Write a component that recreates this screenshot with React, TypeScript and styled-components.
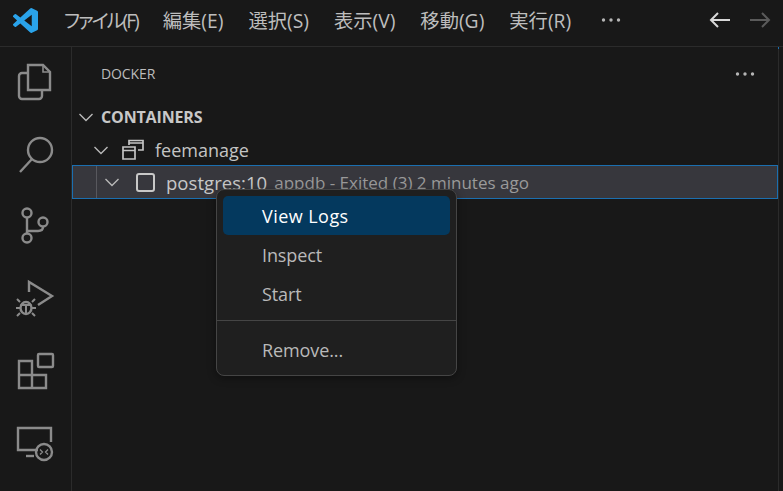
import * as React from 'react'
import styled, { createGlobalStyle } from 'styled-components'

const fontStack = `'Open Sans', 'Noto Sans CJK JP', sans-serif`

const GlobalStyle = createGlobalStyle`
  html, body {
    margin: 0;
    padding: 0;
    background: #181818;
  }
  * {
    box-sizing: border-box;
  }
`

const Chevron = () => (
  <svg width="16" height="16" viewBox="0 0 16 16" fill="none" stroke="#b8b8b8" strokeWidth="1.4">
    <path d="M1.5 5l6.5 6.5L14.5 5" />
  </svg>
)

const Dots = ({ colour }: { colour: string }) => (
  <svg width="20" height="6" viewBox="0 0 20 6" fill={colour}>
    <circle cx="2.5" cy="3" r="1.7" />
    <circle cx="10" cy="3" r="1.7" />
    <circle cx="17.5" cy="3" r="1.7" />
  </svg>
)

const Logo = () => (
  <svg width="25" height="25" viewBox="0 0 24 24" fill="#2aa3ea">
    <path d="M23.15 2.587L18.21.21a1.494 1.494 0 0 0-1.705.29l-9.46 8.63-4.12-3.128a.999.999 0 0 0-1.276.057L.327 7.261A1 1 0 0 0 .326 8.74L3.899 12 .326 15.26a1 1 0 0 0 .001 1.479L1.65 17.94a.999.999 0 0 0 1.276.057l4.12-3.128 9.46 8.63a1.492 1.492 0 0 0 1.704.29l4.942-2.377A1.5 1.5 0 0 0 24 20.06V3.939a1.5 1.5 0 0 0-.85-1.352zm-5.146 14.861L10.826 12l7.178-5.448v10.896z" />
  </svg>
)

const ActivityIcon = ({ children }: { children: React.ReactNode }) => (
  <svg width="44" height="44" viewBox="0 0 44 44" fill="none" stroke="#8b8b8b" strokeWidth="2.4">
    {children}
  </svg>
)

const activityIcons = [
  <ActivityIcon key="files">
    <path d="M15 6h15l7 7v18H15z" />
    <path d="M30 6v7h7" strokeWidth="1.6" />
    <path d="M15 14H9a3 3 0 0 0-3 3v20a3 3 0 0 0 3 3h17a3 3 0 0 0 3-3v-6" />
  </ActivityIcon>,
  <ActivityIcon key="search">
    <circle cx="27" cy="19" r="12" />
    <path d="M19 28L7 41" />
  </ActivityIcon>,
  <ActivityIcon key="git">
    <circle cx="14" cy="10" r="4.5" />
    <circle cx="14" cy="35" r="4.5" />
    <circle cx="30" cy="19" r="4.5" />
    <path d="M14 15v15" />
    <path d="M30 24c0 3-2 4-5 4H14" />
  </ActivityIcon>,
  <ActivityIcon key="debug">
    <path d="M16 17V7l23 14-14 9" />
    <ellipse cx="13" cy="33" rx="5.5" ry="6" />
    <path d="M7.5 30h11M13 30v9M7 27l-3-3M19 27l3-3M7 33H3M19 33h4M7 38l-3 3M19 38l3 3" strokeWidth="2" />
  </ActivityIcon>,
  <ActivityIcon key="extensions">
    <rect x="25" y="7" width="15" height="13" rx="1" />
    <path d="M6 14h13v27H6zM19 28h14v13H19zM6 28h13" />
  </ActivityIcon>,
  <ActivityIcon key="remote">
    <path d="M25 31H5V9h33v14" />
    <path d="M13 37h8" />
    <circle cx="31" cy="33" r="8" />
    <path d="M27 30.5l2.5 2.5-2.5 2.5M35 30.5L32.5 33l2.5 2.5" strokeWidth="1.3" />
  </ActivityIcon>,
]

const menuLabels = [
  { label: 'ファイル(F)', kana: true },
  { label: '編集(E)' },
  { label: '選択(S)' },
  { label: '表示(V)' },
  { label: '移動(G)' },
  { label: '実行(R)' },
]

export default function App() {
  return (
    <Window>
      <GlobalStyle />
      <TitleBar>
        <LogoSlot>
          <Logo />
        </LogoSlot>
        <MenuBar>
          {menuLabels.map(({ label, kana }) => (
            <MenuLabel key={label} $kana={kana}>
              {label}
            </MenuLabel>
          ))}
          <MoreSlot>
            <Dots colour="#b5b5b5" />
          </MoreSlot>
        </MenuBar>
        <NavArrows>
          <svg width="22" height="18" viewBox="0 0 22 18" fill="none" stroke="#d8d8d8" strokeWidth="2">
            <path d="M21 9H2M9 2L2 9l7 7" />
          </svg>
          <svg width="22" height="18" viewBox="0 0 22 18" fill="none" stroke="#5a5a5a" strokeWidth="2">
            <path d="M1 9h19M13 2l7 7-7 7" />
          </svg>
        </NavArrows>
      </TitleBar>
      <Body>
        <ActivityBar>
          {activityIcons.map((icon, i) => (
            <ActivitySlot key={i}>{icon}</ActivitySlot>
          ))}
        </ActivityBar>
        <SideBar>
          <PanelHeader>
            <PanelTitle>DOCKER</PanelTitle>
            <Dots colour="#b5b5b5" />
          </PanelHeader>
          <SectionHeader>
            <Chevron />
            <SectionTitle>CONTAINERS</SectionTitle>
          </SectionHeader>
          <GroupRow>
            <Chevron />
            <svg width="24" height="22" viewBox="0 0 24 22" fill="none" stroke="#c4c4c4" strokeWidth="1.7">
              <path d="M2 8h12v12H2zM2 11.5h12" />
              <path d="M8 6V1.5h14V11h-5M8 4h14" />
            </svg>
            <GroupLabel>feemanage</GroupLabel>
          </GroupRow>
          <ContainerRow>
            <IndentGuide />
            <Chevron />
            <StopBox />
            <ContainerName>postgres:10</ContainerName>
            <ContainerStatus>appdb - Exited (3) 2 minutes ago</ContainerStatus>
            <ContextMenu>
              <MenuItem $active>View Logs</MenuItem>
              <MenuItem>Inspect</MenuItem>
              <MenuItem>Start</MenuItem>
              <MenuDivider />
              <MenuItem>Remove...</MenuItem>
            </ContextMenu>
          </ContainerRow>
        </SideBar>
      </Body>
    </Window>
  )
}

const Window = styled.div`
  width: 783px;
  height: 491px;
  background: #181818;
  display: flex;
  flex-direction: column;
  overflow: hidden;
  font-family: ${fontStack};
  color: #cccccc;
`

const TitleBar = styled.div`
  height: 47px;
  padding-bottom: 6px;
  display: flex;
  align-items: center;
  border-bottom: 1px solid #2b2b2b;
  flex-shrink: 0;
`

const LogoSlot = styled.div`
  width: 64px;
  padding-left: 13px;
  display: flex;
  align-items: center;
`

const MenuBar = styled.div`
  display: flex;
  align-items: center;
  gap: 25px;
  flex: 1;
`

const MenuLabel = styled.span<{ $kana?: boolean }>`
  font-size: 19.3px;
  letter-spacing: ${({ $kana }) => ($kana ? '-2.05px' : '0')};
  font-feature-settings: ${({ $kana }) => ($kana ? "'palt'" : 'normal')};
  color: #bdbdbd;
  white-space: nowrap;
`

const MoreSlot = styled.span`
  display: flex;
  align-items: center;
  margin-left: 5px;
`

const NavArrows = styled.div`
  display: flex;
  gap: 18px;
  padding-right: 12px;
`

const Body = styled.div`
  flex: 1;
  display: flex;
  min-height: 0;
`

const ActivityBar = styled.div`
  width: 72px;
  flex-shrink: 0;
  border-right: 1px solid #2b2b2b;
  display: flex;
  flex-direction: column;
`

const ActivitySlot = styled.div`
  height: 72px;
  padding-top: 12px;
  padding-left: 13px;
`

const SideBar = styled.div`
  position: relative;
  flex: 1;
  min-width: 0;
  margin-right: 4px;
  border-right: 1px solid #2b2b2b;
  display: flex;
  flex-direction: column;
  &::after {
    content: '';
    position: absolute;
    top: 0;
    right: -1px;
    width: 1px;
    height: 2px;
    background: #1b6fb0;
  }
`

const PanelHeader = styled.div`
  height: 53px;
  padding: 0 23px 0 29px;
  display: flex;
  align-items: center;
  justify-content: space-between;
`

const PanelTitle = styled.span`
  font-size: 14px;
  letter-spacing: -0.1px;
  color: #bcbcbc;
`

const SectionHeader = styled.div`
  height: 34px;
  padding-left: 6px;
  display: flex;
  align-items: center;
  gap: 7px;
`

const SectionTitle = styled.span`
  font-size: 16px;
  font-weight: 700;
  letter-spacing: -0.15px;
  color: #c8c8c8;
`

const GroupRow = styled.div`
  height: 31px;
  padding-left: 21px;
  display: flex;
  align-items: center;
  gap: 12px;
`

const GroupLabel = styled.span`
  font-size: 18px;
  margin-left: -2px;
  color: #c4c4c4;
`

const ContainerRow = styled.div`
  position: relative;
  height: 34px;
  padding-left: 31px;
  display: flex;
  align-items: center;
  background: #37373d;
  border: 1px solid #1b6fb0;
`

const IndentGuide = styled.span`
  position: absolute;
  left: 23px;
  top: 0;
  bottom: 0;
  width: 1px;
  background: #58585e;
`

const StopBox = styled.span`
  width: 19px;
  height: 19px;
  margin-left: 16px;
  border: 2px solid #c8c8c8;
  border-radius: 3px;
  flex-shrink: 0;
`

const ContainerName = styled.span`
  font-size: 18.5px;
  letter-spacing: 0.05px;
  margin-left: 11px;
  color: #c8c8c8;
  white-space: nowrap;
`

const ContainerStatus = styled.span`
  font-size: 17px;
  margin-left: 7px;
  color: #9a9a9a;
  white-space: nowrap;
`

const ContextMenu = styled.div`
  position: absolute;
  left: 143px;
  top: 23px;
  width: 241px;
  padding: 6px;
  background: #1f1f1f;
  border: 1px solid #454545;
  border-radius: 8px;
  box-shadow: 0 2px 8px rgba(0, 0, 0, 0.4);
`

const MenuItem = styled.div<{ $active?: boolean }>`
  height: 39px;
  padding-left: 39px;
  display: flex;
  align-items: center;
  border-radius: 5px;
  font-size: 18px;
  letter-spacing: ${({ $active }) => ($active ? '0.45px' : '-0.1px')};
  background: ${({ $active }) => ($active ? '#04395e' : 'transparent')};
  color: ${({ $active }) => ($active ? '#ffffff' : '#b9b9b9')};
`

const MenuDivider = styled.div`
  height: 1px;
  margin: 7px -6px 9px;
  background: #454545;
`
